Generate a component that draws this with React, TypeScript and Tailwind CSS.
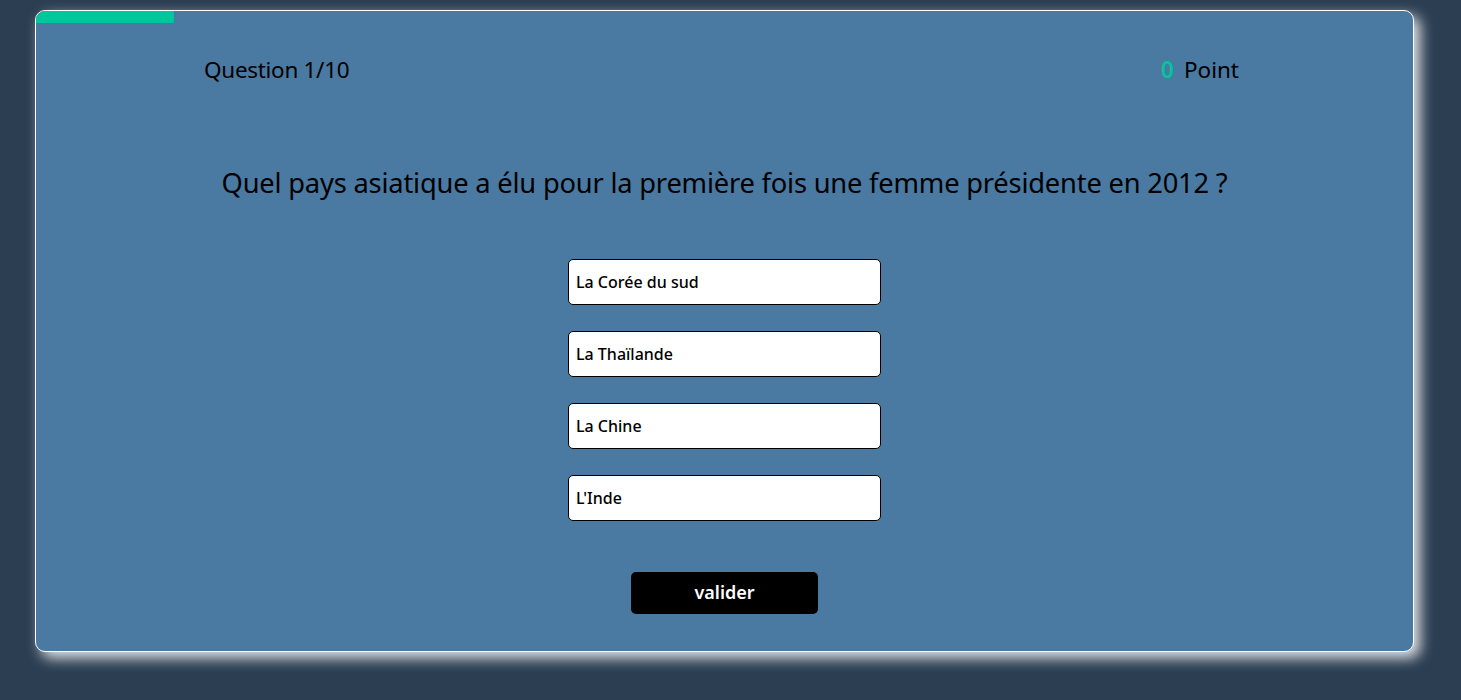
import { useState } from 'react'

const answers = ['La Corée du sud', 'La Thaïlande', 'La Chine', "L'Inde"]

export default function App() {
  const [selected, setSelected] = useState<number | null>(null)

  return (
    <main
      className="min-h-[700px] bg-[#2b3e52] pt-[10px]"
      style={{ fontFamily: '"Noto Sans", "Open Sans", sans-serif' }}
    >
      <div className="ml-[35px] w-[1379px] h-[642px] overflow-hidden rounded-[10px] border border-white bg-[#4a79a2] shadow-[6px_6px_14px_rgba(240,240,240,0.95)]">
        <div className="h-[12px] w-[138px] bg-[#00c69c]" />

        <div className="flex items-center justify-between pl-[168px] pr-[174px] pt-[30px] text-[22.5px] text-black">
          <span className="tracking-[-0.3px]">Question 1/10</span>
          <span>
            <span className="mr-[10px] font-semibold text-[#00c69c]">0</span>
            Point
          </span>
        </div>

        <h1 className="mt-[76px] text-center text-[27.3px] tracking-[-0.2px] text-black">
          Quel pays asiatique a élu pour la première fois une femme présidente en 2012 ?
        </h1>

        <div className="mt-[55px] flex flex-col items-center gap-[26px]">
          {answers.map((a, i) => (
            <button
              key={a}
              onClick={() => setSelected(i)}
              className={
                'flex h-[46px] w-[313px] items-center rounded-[5px] border border-black pl-[7px] text-left text-[16px] font-medium text-black ' +
                (selected === i ? 'bg-[#d8e6f3]' : 'bg-white')
              }
            >
              {a}
            </button>
          ))}
        </div>

        <div className="mt-[51px] flex justify-center">
          <button className="h-[42px] w-[187px] rounded-[5px] bg-black text-[18px] font-semibold text-white">
            valider
          </button>
        </div>
      </div>
    </main>
  )
}
